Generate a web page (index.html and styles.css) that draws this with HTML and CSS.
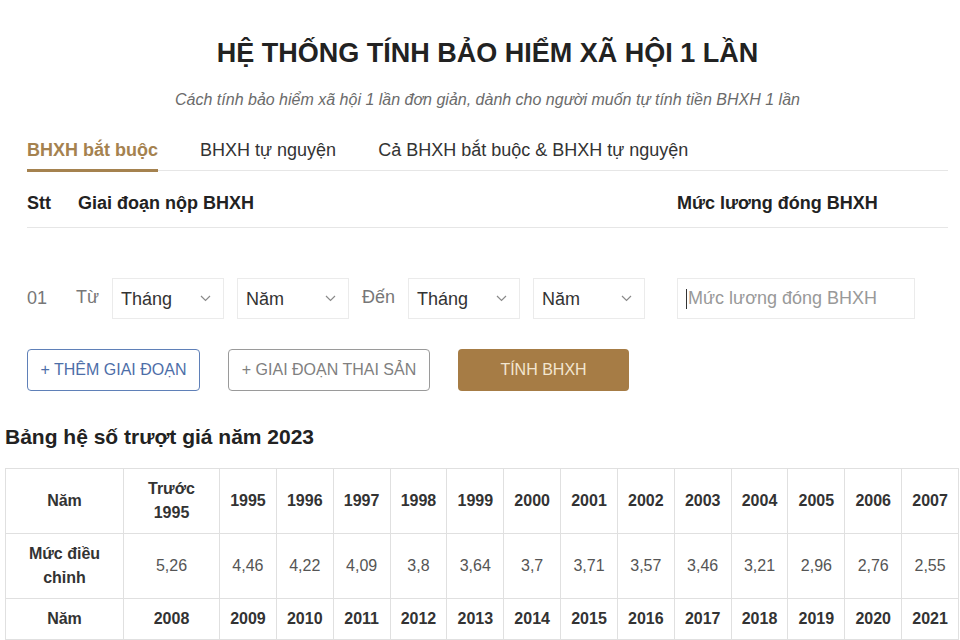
FILE: index.html
```html
<!DOCTYPE html>
<html lang="vi">
<head>
<meta charset="utf-8">
<title>Hệ thống tính bảo hiểm xã hội 1 lần</title>
<link rel="stylesheet" href="styles.css">
</head>
<body>
<div class="calc">
  <h1 class="title">HỆ THỐNG TÍNH BẢO HIỂM XÃ HỘI 1 LẦN</h1>
  <p class="subtitle">Cách tính bảo hiểm xã hội 1 lần đơn giản, dành cho người muốn tự tính tiền BHXH 1 lần</p>
  <div class="tabs">
    <span class="tab active">BHXH bắt buộc</span>
    <span class="tab">BHXH tự nguyện</span>
    <span class="tab">Cả BHXH bắt buộc &amp; BHXH tự nguyện</span>
  </div>
  <div class="thead">
    <span class="th-stt">Stt</span>
    <span class="th-period">Giai đoạn nộp BHXH</span>
    <span class="th-salary">Mức lương đóng BHXH</span>
  </div>
  <div class="period-row">
    <span class="stt">01</span>
    <span class="lbl">Từ</span>
    <div class="select"><span>Tháng</span><svg class="chev" width="11" height="7" viewBox="0 0 11 7"><path d="M1 1l4.5 4.5L10 1" fill="none" stroke="#8a8a8a" stroke-width="1.2"/></svg></div>
    <div class="select"><span>Năm</span><svg class="chev" width="11" height="7" viewBox="0 0 11 7"><path d="M1 1l4.5 4.5L10 1" fill="none" stroke="#8a8a8a" stroke-width="1.2"/></svg></div>
    <span class="lbl">Đến</span>
    <div class="select"><span>Tháng</span><svg class="chev" width="11" height="7" viewBox="0 0 11 7"><path d="M1 1l4.5 4.5L10 1" fill="none" stroke="#8a8a8a" stroke-width="1.2"/></svg></div>
    <div class="select"><span>Năm</span><svg class="chev" width="11" height="7" viewBox="0 0 11 7"><path d="M1 1l4.5 4.5L10 1" fill="none" stroke="#8a8a8a" stroke-width="1.2"/></svg></div>
    <div class="salary-input"><span class="caret"></span><span class="ph">Mức lương đóng BHXH</span></div>
  </div>
  <div class="actions">
    <button class="btn btn-add">+ THÊM GIAI ĐOẠN</button>
    <button class="btn btn-maternity">+ GIAI ĐOẠN THAI SẢN</button>
    <button class="btn btn-calc">TÍNH BHXH</button>
  </div>
</div>
<section class="coef">
  <h2 class="coef-title">Bảng hệ số trượt giá năm 2023</h2>
  <table class="coef-table">
    <colgroup>
      <col class="col-label">
      <col class="col-wide">
      <col><col><col><col><col><col><col><col><col><col><col><col><col>
    </colgroup>
    <tr class="yr">
      <td>Năm</td><td>Trước 1995</td><td>1995</td><td>1996</td><td>1997</td><td>1998</td><td>1999</td><td>2000</td><td>2001</td><td>2002</td><td>2003</td><td>2004</td><td>2005</td><td>2006</td><td>2007</td>
    </tr>
    <tr class="val">
      <td class="lab">Mức điều chỉnh</td><td>5,26</td><td>4,46</td><td>4,22</td><td>4,09</td><td>3,8</td><td>3,64</td><td>3,7</td><td>3,71</td><td>3,57</td><td>3,46</td><td>3,21</td><td>2,96</td><td>2,76</td><td>2,55</td>
    </tr>
    <tr class="yr">
      <td>Năm</td><td>2008</td><td>2009</td><td>2010</td><td>2011</td><td>2012</td><td>2013</td><td>2014</td><td>2015</td><td>2016</td><td>2017</td><td>2018</td><td>2019</td><td>2020</td><td>2021</td>
    </tr>
  </table>
</section>
</body>
</html>
```
FILE: styles.css
```css
* { box-sizing: border-box; }
html, body { margin: 0; padding: 0; background: #fff; }
body {
  font-family: "Liberation Sans", Arial, sans-serif;
  color: #222;
}
.calc {
  padding: 37px 12px 0 27px;
}
.title {
  margin: 0;
  font-size: 27px;
  line-height: 32px;
  font-weight: bold;
  text-align: center;
  color: #222;
}
.subtitle {
  margin: 20px 0 0;
  font-size: 16px;
  line-height: 22px;
  font-style: italic;
  text-align: center;
  color: #6b6b6b;
}
.tabs {
  margin-top: 28px;
  display: flex;
  gap: 42px;
  border-bottom: 1px solid #e6e6e6;
}
.tab {
  font-size: 18px;
  line-height: 22px;
  color: #333;
  padding-bottom: 8px;
  border-bottom: 3px solid transparent;
  margin-bottom: -2px;
}
.tab.active {
  color: #a5824f;
  font-weight: bold;
  border-bottom-color: #a5824f;
}
.thead {
  display: flex;
  padding: 21px 0 13px;
  border-bottom: 1px solid #e6e6e6;
  font-size: 18px;
  line-height: 22px;
  font-weight: bold;
  color: #222;
}
.th-stt { width: 51px; }
.th-period { flex: 1; }
.th-salary { width: 271px; }
.period-row {
  margin-top: 50px;
  display: flex;
  align-items: center;
  gap: 13px;
}
.stt {
  width: 36px;
  font-size: 18px;
  color: #777;
}
.lbl {
  font-size: 18px;
  color: #777;
  margin-top: -2px;
}
.select {
  width: 112px;
  height: 41px;
  border: 1px solid #ebebeb;
  display: flex;
  align-items: center;
  justify-content: space-between;
  padding: 0 12px 0 8px;
  font-size: 18px;
  color: #333;
}
.select span { padding-top: 2px; }
.chev { display: block; }
.salary-input {
  margin-left: 19px;
  width: 238px;
  height: 41px;
  border: 1px solid #ebebeb;
  display: flex;
  align-items: center;
  padding-left: 8px;
  font-size: 18px;
}
.caret {
  width: 1px;
  height: 20px;
  background: #333;
  margin-right: 1px;
}
.ph { color: #999; }
.actions {
  margin-top: 30px;
  display: flex;
  gap: 28px;
}
.btn {
  height: 42px;
  font-family: "Liberation Sans", Arial, sans-serif;
  font-size: 16px;
  border-radius: 4px;
  background: #fff;
  padding: 0;
  white-space: nowrap;
  text-align: center;
}
.btn-add {
  width: 173px;
  border: 1px solid #5f80b8;
  color: #4d6ea8;
}
.btn-maternity {
  width: 202px;
  border: 1px solid #9a9a9a;
  color: #808080;
}
.btn-calc {
  width: 171px;
  border: none;
  background: #a67c45;
  color: #f3e6d0;
}
.coef {
  padding: 0 1px 0 5px;
}
.coef-title {
  margin: 33px 0 0;
  font-size: 21px;
  line-height: 26px;
  font-weight: bold;
  color: #222;
}
.coef-table {
  margin-top: 18px;
  width: 954px;
  border-collapse: collapse;
  table-layout: fixed;
}
.col-label { width: 118px; }
.col-wide { width: 96px; }
.coef-table td {
  border: 1px solid #e0e0e0;
  padding: 8px 6px;
  text-align: center;
  vertical-align: middle;
  font-size: 16px;
  line-height: 24px;
}
.yr td {
  font-weight: bold;
  color: #333;
}
.val td {
  color: #555;
}
.val td.lab {
  font-weight: bold;
  color: #333;
  padding: 8px 14px;
}
.coef-table tr > td:nth-child(2) { padding: 8px 12px; }
```
